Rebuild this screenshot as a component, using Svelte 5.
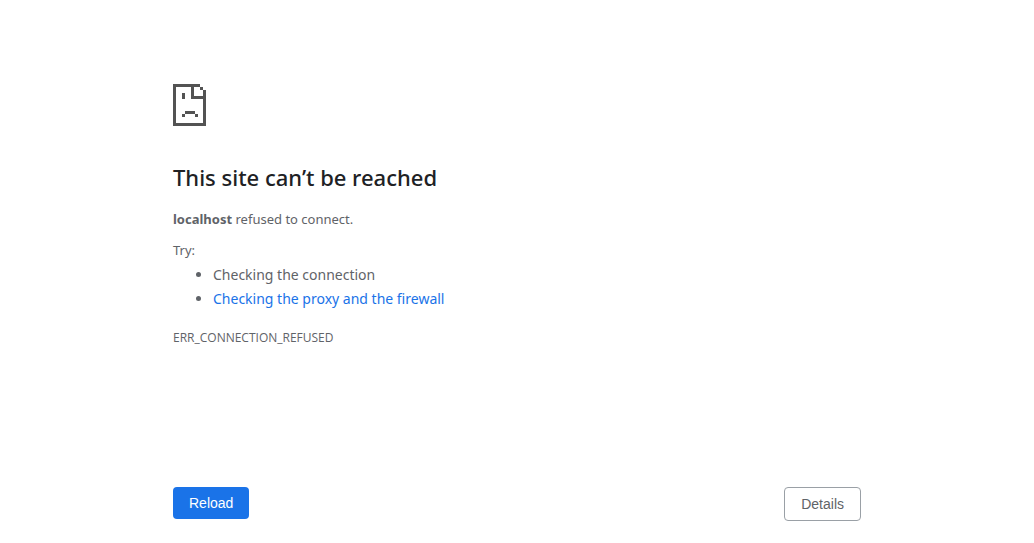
<script>
  let showDetails = $state(false);
</script>

<svelte:head><title>localhost</title></svelte:head>

<main>
  <svg class="icon" viewBox="0 0 33 42" shape-rendering="crispEdges" aria-hidden="true">
    <path d="M0 0h27v3H0zM0 3h3v36H0zM0 39h33v3H0zM30 6h3v33h-3zM27 3h3v3h-3zM18 3h3v9h-3zM18 12h12v3H18zM9 9h3v6H9zM12 27h10v3H12zM9 30h3v3H9zM22 30h3v3h-3z" />
  </svg>
  <h1>This site can’t be reached</h1>
  <p class="summary"><strong>localhost</strong> refused to connect.</p>
  <p class="try">Try:</p>
  <ul>
    <li>Checking the connection</li>
    <li><a href="#buttons">Checking the proxy and the firewall</a></li>
  </ul>
  <p class="code">ERR_CONNECTION_REFUSED</p>
  <div class="buttons" id="buttons">
    <button class="primary" onclick={() => location.reload()}>Reload</button>
    <button class="secondary" aria-expanded={showDetails} onclick={() => (showDetails = !showDetails)}>Details</button>
  </div>
</main>

<style>
  :global(body) {
    margin: 0;
    background: #fff;
  }
  main {
    box-sizing: border-box;
    width: 100%;
    max-width: 736px;
    margin: 0 auto;
    padding: 84px 24px 0;
    color: #5f6368;
    font-family: "Segoe UI", "Noto Sans", sans-serif;
    font-size: 13px;
    line-height: 20px;
  }
  .icon {
    display: block;
    width: 33px;
    height: 42px;
    fill: #535353;
  }
  h1 {
    margin: 35px 0 16px;
    color: #202124;
    font-family: "Segoe UI", "Noto Sans", sans-serif;
    font-size: 22px;
    font-weight: 500;
    line-height: 32px;
  }
  p {
    margin: 0;
  }
  .try {
    margin-top: 11px;
  }
  ul {
    margin: 0;
    padding: 3px 0 0 40px;
    font-size: 14px;
    line-height: 24px;
  }
  a {
    color: #1a73e8;
    text-decoration: none;
  }
  .code {
    margin-top: 17px;
    font-family: "Segoe UI", "Open Sans", sans-serif;
    font-size: 12px;
  }
  .buttons {
    display: flex;
    justify-content: space-between;
    align-items: flex-start;
    margin-top: 139px;
  }
  button {
    padding: 8px 16px;
    border: 0;
    border-radius: 4px;
    font-family: "Liberation Sans", Arial, sans-serif;
    font-size: 14px;
    line-height: 16px;
    cursor: pointer;
  }
  .primary {
    background: #1a73e8;
    color: #fff;
  }
  .secondary {
    border: 1px solid #9aa0a6;
    background: #fff;
    color: #5f6368;
  }
</style>
